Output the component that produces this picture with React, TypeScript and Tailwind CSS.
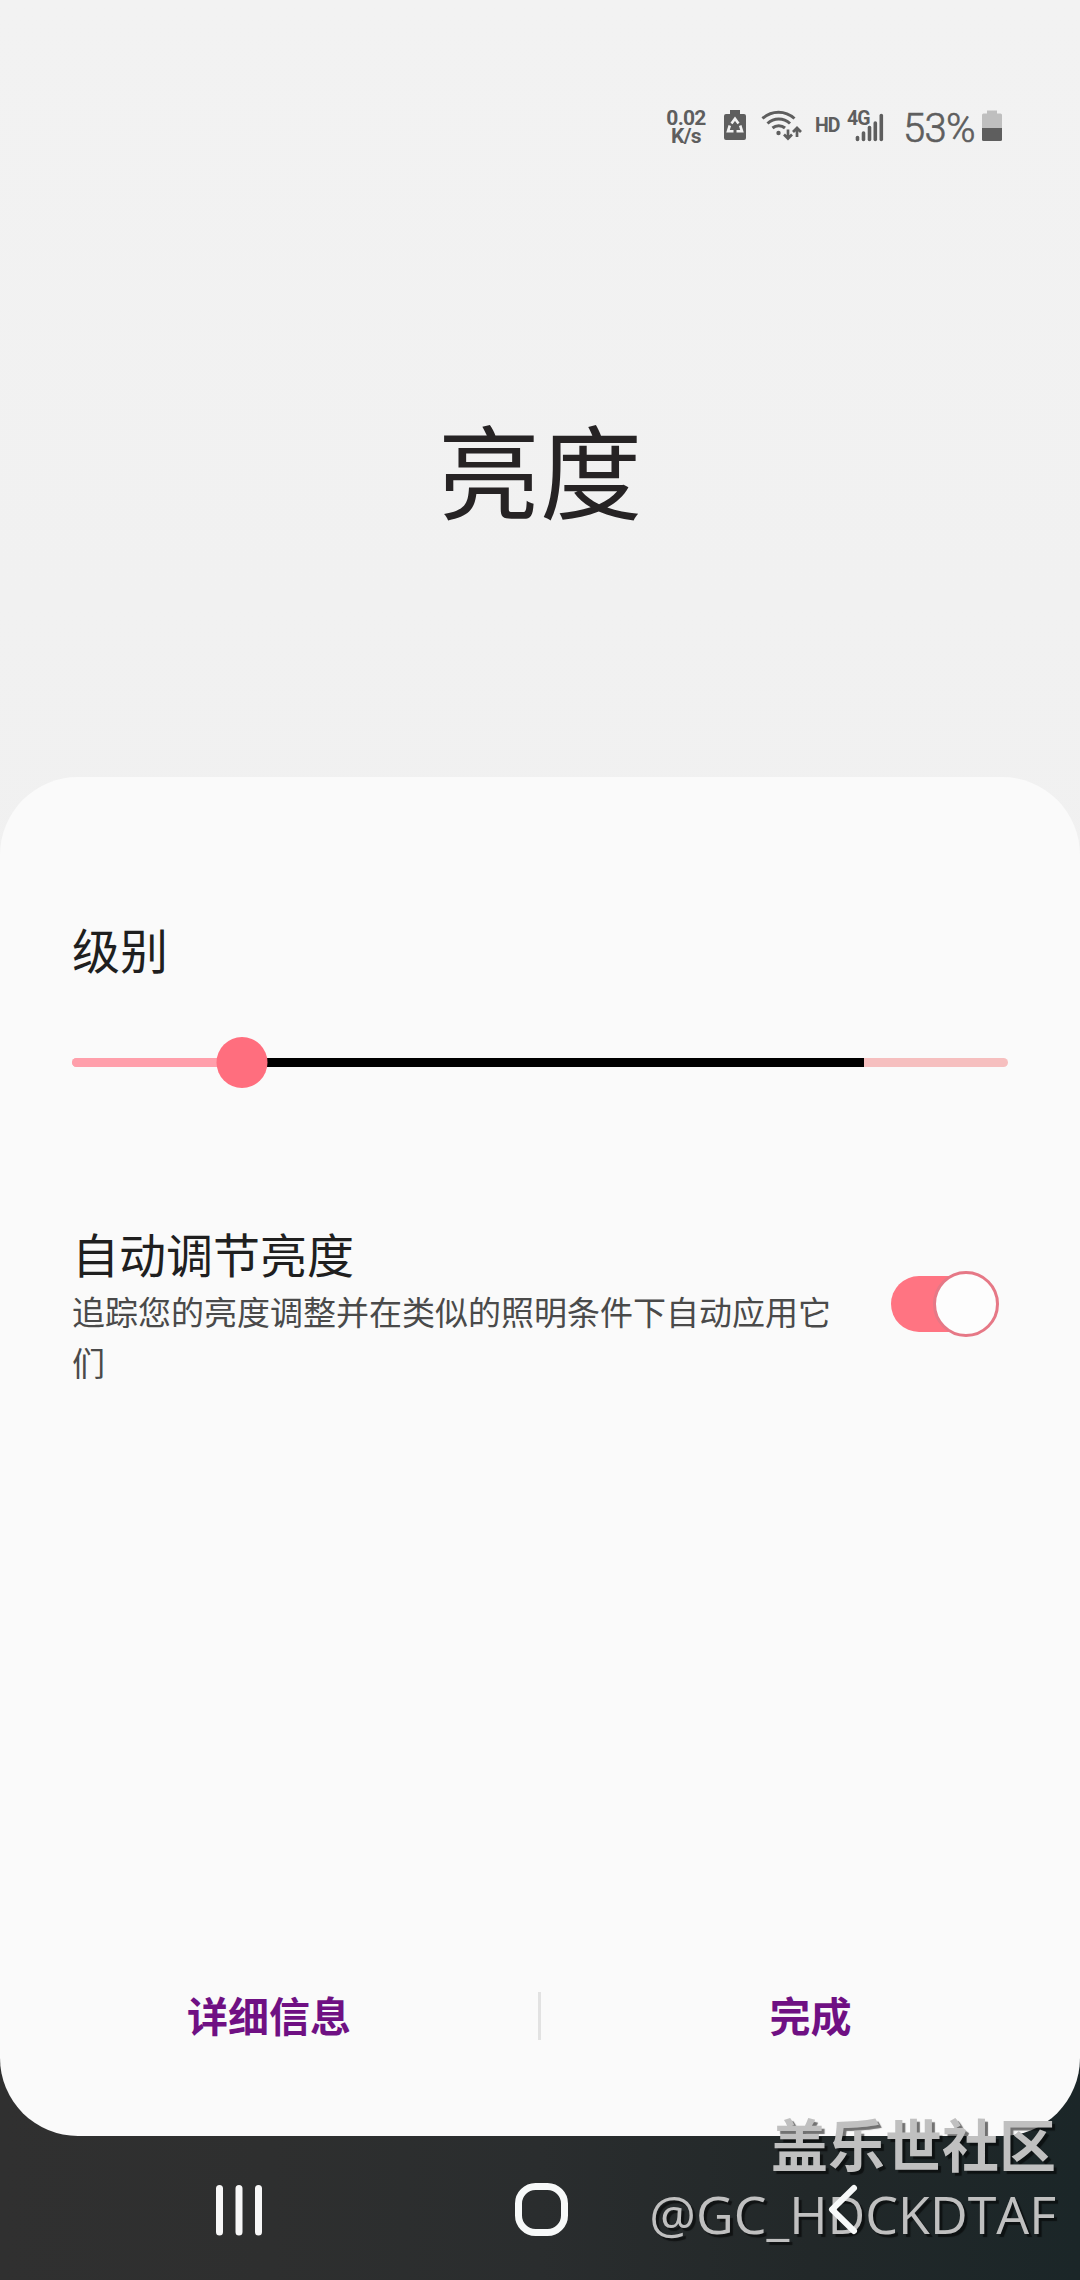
import { useState } from 'react';

const actions = [
  { id: 'details', name: '详细信息' },
  { id: 'done', name: '完成' }
];

function WifiIcon() {
  return (
    <svg width="42" height="34" viewBox="0 0 42 34" fill="none" stroke="#5e5e5e" strokeWidth="3">
      <path d="M1.500 9.500C11 1 24 1 33.500 9.500" />
      <path d="M6.500 14.500C13 8.500 22.500 8.500 29 14.500" />
      <path d="M11.500 19C15 16 20.500 16 24 19" />
      <circle cx="17.500" cy="24" r="2.200" fill="#5e5e5e" stroke="none" />
      <path d="M27 20.500V29M23 25.500L27 29.500L31 25.500" strokeWidth="2.700" />
      <path d="M36 28V19.500M32 23L36 19L40 23" strokeWidth="2.700" />
    </svg>
  );
}

function SaverIcon() {
  return (
    <svg width="22" height="32" viewBox="0 0 22 32">
      <path d="M6 1h10v4h4a2 2 0 0 1 2 2v22a2 2 0 0 1-2 2H2a2 2 0 0 1-2-2V7a2 2 0 0 1 2-2h4z" fill="#5e5e5e" />
      <g fill="none" stroke="#f2f2f2" strokeWidth="2.600">
        <path d="M7.500 14.500L11 9.800L14.500 14.500" />
        <path d="M5.800 16.500L4 22.300H9.500" />
        <path d="M16.200 16.500L18 22.300H12.500" />
      </g>
      <path d="M7.500 18.500L11 14.500L14.500 18.500Z" fill="#5e5e5e" />
    </svg>
  );
}

function StatusBar() {
  return (
    <div className="flex h-[256px] items-start pl-[666px] pt-[109px] text-[#5e5e5e] font-['Roboto',sans-serif]">
      <div className="w-[40px] shrink-0 text-center text-[21px] font-bold leading-[18px] tracking-[-0.7px]">
        <p>0.02</p>
        <p>K/s</p>
      </div>
      <div className="ml-[18px] shrink-0">
        <SaverIcon />
      </div>
      <div className="ml-[15px] shrink-0">
        <WifiIcon />
      </div>
      <span className="ml-[12px] mt-[7px] w-[28px] shrink-0 text-[19.500px] font-bold leading-[20px] tracking-[-1px]">HD</span>
      <div className="relative ml-[4px] h-[34px] w-[38px] shrink-0">
        <svg width="38" height="34" viewBox="0 0 38 34">
          <g stroke="#5e5e5e" strokeWidth="3.600" strokeLinecap="round">
            <path d="M10.500 28.500V30.500" />
            <path d="M16.500 24V30.500" />
            <path d="M22.500 18.500V30.500" />
            <path d="M28.300 14V30.500" />
            <path d="M34.300 6.500V30.500" />
          </g>
        </svg>
        <span className="absolute left-0 top-0 text-[19.500px] font-bold leading-[20px] tracking-[-1px]">4G</span>
      </div>
      <span className="ml-[18px] w-[75px] shrink-0 text-[40px] leading-[39px] font-light tracking-[-0.7px] [-webkit-text-stroke:0.6px_#5e5e5e]">53%</span>
      <svg className="ml-[4px] shrink-0" width="20" height="33" viewBox="0 0 20 33">
        <path d="M5 1.500h10v3h3.500a1.500 1.500 0 0 1 1.500 1.500V19H0V6a1.500 1.500 0 0 1 1.500-1.500H5z" fill="#bfbfbf" />
        <path d="M0 19h20v11.500a1.500 1.500 0 0 1-1.500 1.500h-17A1.500 1.500 0 0 1 0 30.500z" fill="#5e5e5e" />
      </svg>
    </div>
  );
}

interface BrightnessSliderProps {
  value: number;
  max: number;
}

function BrightnessSlider({ value, max }: BrightnessSliderProps) {
  return (
    <div className="relative flex h-[51px] items-center">
      <div className="flex h-[9px] w-full overflow-hidden rounded-full bg-[#f6bfbf]">
        <div className="bg-[#ff9fab]" style={{ width: value }} />
        <div className="bg-black" style={{ width: max - value }} />
      </div>
      <div
        className="absolute top-0 size-[51px] -translate-x-1/2 rounded-full bg-[#ff6e7e]"
        style={{ left: value }}
      />
    </div>
  );
}

export default function App() {
  const [auto, setAuto] = useState(true);

  return (
    <div className="relative h-[2280px] w-[1080px] overflow-hidden bg-[linear-gradient(to_bottom,#f2f2f2_0px,#f0f0f0_1200px,transparent_1200px),linear-gradient(to_right,#303030_0%,#2e2f2f_25%,#2a2d2e_50%,#222829_75%,#1b2628_100%)] font-['Noto_Sans_CJK_SC',sans-serif]">
      <StatusBar />

      <header className="flex h-[521px] justify-center pt-[137px]">
        <h1 className="h-[150px] text-[102px] leading-[150px] text-[#262324]">亮度</h1>
      </header>

      {/* Settings panel */}
      <main className="flex h-[1359px] flex-col rounded-[78px] bg-[#fafafa] px-[72px] pt-[135px]">
        <h2 className="h-[72px] text-[48px] leading-[72px] text-[#1f1f1f]">级别</h2>
        <div className="mt-[53px]">
          <BrightnessSlider value={169.5} max={792} />
        </div>

        <div className="mt-[132px] flex items-start">
          <div className="w-[765px]">
            <h3 className="text-[47px] leading-[66px] text-[#1f1f1f]">自动调节亮度</h3>
            <p className="text-[33px] leading-[51px] text-[#4a4a4a]">
              追踪您的亮度调整并在类似的照明条件下自动应用它们
            </p>
          </div>
          <button
            onClick={() => setAuto(!auto)}
            className="ml-[54px] mt-[51px] flex h-[66px] w-[108px] items-center"
          >
            <span className="h-[56px] w-[80px] shrink-0 rounded-l-full bg-[#ff7482]" />
            <span className="-ml-[38px] size-[66px] shrink-0 rounded-full border-[3px] border-[#e67886] bg-[#fdfdfd]" />
          </button>
        </div>

        {/* Bottom actions */}
        <div className="-mx-[72px] mb-[95px] mt-auto flex h-[50px] items-center">
          {actions.map((a, i) => (
            <button
              key={a.id}
              className={
                i === 0
                  ? 'h-[48px] w-[541px] border-r-[3px] border-[#e2e2e2] pb-[3px] text-[41px] font-bold leading-[45px] text-[#6f1083]'
                  : 'h-[48px] w-[539px] pb-[3px] text-[41px] font-bold leading-[45px] text-[#6f1083]'
              }
            >
              {a.name}
            </button>
          ))}
        </div>
      </main>

      {/* Community watermark */}
      <div className="absolute right-[24px] top-[2107px] text-right text-[#c0c0c0] [text-shadow:3px_3px_1px_rgba(0,0,0,0.55)]">
        <p className="text-[57px] font-bold leading-[70px]">盖乐世社区</p>
        <p className="font-['Open_Sans',sans-serif] text-[52px] leading-[74px]">@GC_HDCKDTAF</p>
      </div>

      {/* Navigation bar */}
      <nav className="relative flex h-[144px] items-start pt-[46px]">
        <svg className="ml-[216px]" width="48" height="54" viewBox="0 0 48 54" stroke="#f7f7f7" strokeWidth="7" strokeLinecap="round">
          <path d="M3.500 6.500V50M23 6.500V50M42.500 6.500V50" />
        </svg>
        <svg className="ml-[250px]" width="55" height="56" viewBox="0 0 55 56">
          <rect x="4.500" y="4.500" width="46" height="46" rx="17" fill="none" stroke="#f7f9f9" strokeWidth="7" />
        </svg>
        <svg className="ml-[258px]" width="34" height="54" viewBox="0 0 34 54" fill="none" stroke="#f7f9f9" strokeWidth="6" strokeLinecap="round" strokeLinejoin="round">
          <path d="M27 6L5 27.500L27 49" />
        </svg>
      </nav>
    </div>
  );
}
